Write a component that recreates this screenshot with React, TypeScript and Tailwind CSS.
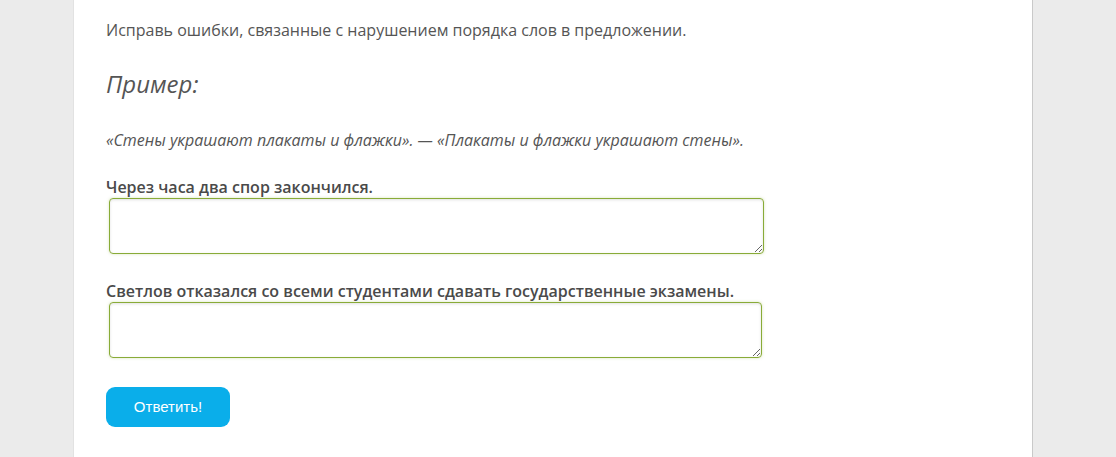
import React from 'react';

const questions = [
  { id: 'q1', text: 'Через часа два спор закончился.', width: 'w-[655px]' },
  {
    id: 'q2',
    text: 'Светлов отказался со всеми студентами сдавать государственные экзамены.',
    width: 'w-[653px]',
  },
];

export default function App() {
  return (
    <div className="min-h-[457px] bg-[#ebebeb] font-['Open_Sans',sans-serif]">
      <div className="ml-[73px] w-[960px] min-h-[457px] bg-white border-l border-l-[#e2e2e2] border-r border-r-[#c9c9c9] pl-[32px] pt-[19px] text-[#555555]">
        {/* задание */}
        <p className="text-[16px] leading-[22px]">
          Исправь ошибки, связанные с нарушением порядка слов в предложении.
        </p>

        <h3 className="mt-[28px] text-[24px] leading-[30px] italic">Пример:</h3>

        <p className="mt-[30px] text-[16px] leading-[22px] italic">
          «Стены украшают плакаты и флажки». — «Плакаты и флажки украшают стены».
        </p>

        <div className="mt-[25px]">
          {questions.map((q, i) => (
            <div key={q.id} className={i > 0 ? 'mt-[26px]' : ''}>
              <div className="text-[16px] leading-[22px] font-semibold text-[#4a4a4a]">
                {q.text}
              </div>
              <textarea
                className={`ml-[3px] ${q.width} h-[56px] block rounded-[4px] border border-[#89ab38] shadow-[inset_0_1px_3px_rgba(0,0,0,0.12),0_0_3px_rgba(141,179,59,0.35)] outline-none resize-y`}
              />
            </div>
          ))}
        </div>

        <button
          type="button"
          className="mt-[29px] w-[124px] h-[40px] rounded-[9px] bg-[#0aaeea] text-white text-[15px] font-['Liberation_Sans',Arial,sans-serif]"
        >
          Ответить!
        </button>
      </div>
    </div>
  );
}
